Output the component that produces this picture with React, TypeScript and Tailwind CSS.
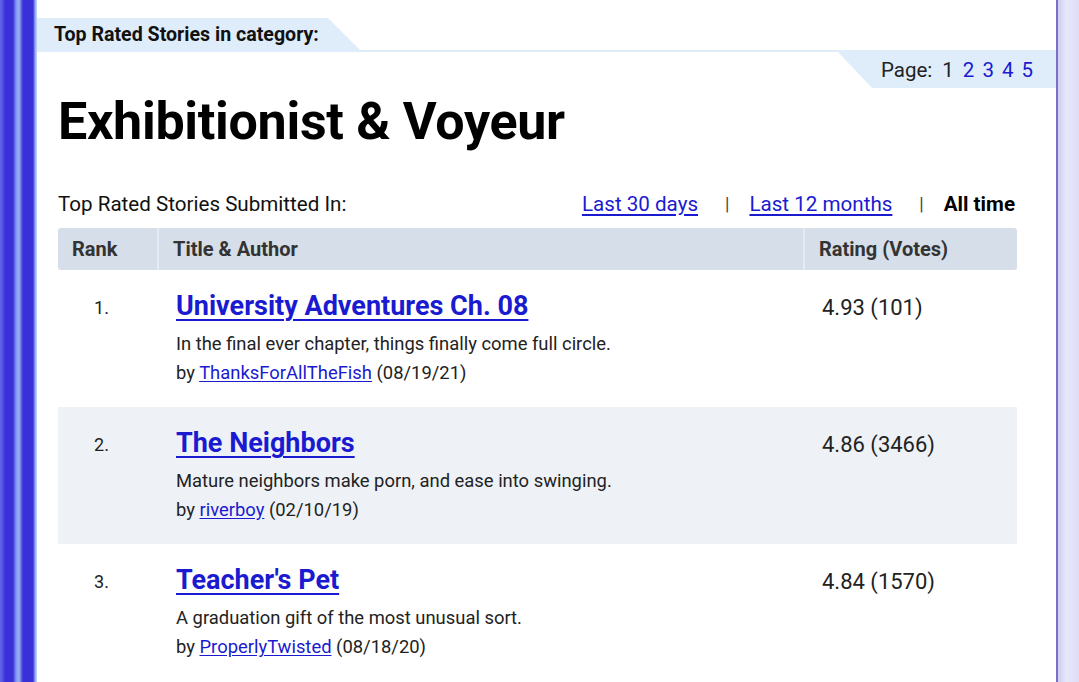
import React from "react";

const stories = [
  {
    rank: 1,
    title: "University Adventures Ch. 08",
    desc: "In the final ever chapter, things finally come full circle.",
    author: "ThanksForAllTheFish",
    date: "08/19/21",
    rating: "4.93 (101)",
  },
  {
    rank: 2,
    title: "The Neighbors",
    desc: "Mature neighbors make porn, and ease into swinging.",
    author: "riverboy",
    date: "02/10/19",
    rating: "4.86 (3466)",
  },
  {
    rank: 3,
    title: "Teacher's Pet",
    desc: "A graduation gift of the most unusual sort.",
    author: "ProperlyTwisted",
    date: "08/18/20",
    rating: "4.84 (1570)",
  },
];

const App = () => {
  return (
    <div className="flex h-[682px] w-[1079px] overflow-hidden bg-white font-['Roboto',sans-serif] text-[#111]">
      {/* Left striped border */}
      <div className="w-[37px] shrink-0 bg-[linear-gradient(to_right,#6464ea_0px,#5050e2_3px,#3a30d8_5px,#3a30d8_13px,#7f96ee_16px,#9ab0f4_19px,#3a30d8_23px,#3a30d8_33px,#8aa4f4_35px,#c8d8fc_37px)]" />

      {/* Main content */}
      <main className="w-[1019px] shrink-0 pt-[18px]">
        {/* Top tab */}
        <div className="flex">
          <div className="h-[32px] w-[323px] bg-[#dfedfb] [clip-path:polygon(0_0,291px_0,323px_100%,0_100%)] pl-[17px] pt-[1px] text-[19.6px] font-bold leading-[32px] text-[#111]">
            Top Rated Stories in category:
          </div>
        </div>
        <div className="h-[2px] bg-[#dfedfb]" />

        {/* Page tab */}
        <div className="flex justify-end">
          <div className="flex h-[36px] w-[218px] items-center gap-[8px] bg-[#dfedfb] pl-[43px] text-[20.5px] [clip-path:polygon(0_0,100%_0,100%_100%,34px_100%)]">
            <span className="text-[#222]">Page:</span>
            <span className="ml-[2px] text-[#222]">1</span>
            <a href="#" className="ml-[1px] text-[#1a1ad0]">2</a>
            <a href="#" className="text-[#1a1ad0]">3</a>
            <a href="#" className="text-[#1a1ad0]">4</a>
            <a href="#" className="text-[#1a1ad0]">5</a>
          </div>
        </div>

        <div className="pl-[21px] pr-[39px]">
          <h1 className="mt-[1px] text-[52px] font-bold leading-[66px] tracking-[-0.3px] text-black">
            Exhibitionist &amp; Voyeur
          </h1>

          {/* Period selector */}
          <div className="mt-[37px] flex items-center text-[20.6px] leading-[24px]">
            <span className="text-[#111]">Top Rated Stories Submitted In:</span>
            <div className="ml-auto flex items-center">
              <a href="#" className="text-[#1a1ad0] underline underline-offset-[3px]">
                Last 30 days
              </a>
              <span className="ml-[27px] mr-[20px] text-[18px] text-[#444]">|</span>
              <a href="#" className="text-[#1a1ad0] underline underline-offset-[3px]">
                Last 12 months
              </a>
              <span className="ml-[27px] mr-[20px] text-[18px] text-[#444]">|</span>
              <span className="mr-[2px] font-bold text-black">All time</span>
            </div>
          </div>

          {/* Table */}
          <div className="mt-[12px]">
            <div className="flex h-[42px] overflow-hidden rounded-[3px] bg-[#d6dee9] text-[20px] font-bold text-[#333]">
              <div className="flex w-[99px] items-center pl-[14px]">Rank</div>
              <div className="w-[2px] bg-[#e6ebf2]" />
              <div className="flex w-[644px] items-center pl-[14px]">Title &amp; Author</div>
              <div className="w-[2px] bg-[#e6ebf2]" />
              <div className="flex flex-1 items-center pl-[14px]">Rating (Votes)</div>
            </div>

            {stories.map((s, i) => (
              <div
                key={s.rank}
                className={`flex h-[137px] ${i % 2 === 1 ? "bg-[#eef2f7]" : "bg-white"}`}
              >
                <div className="w-[118px] pl-[36px] pt-[24px] text-[18px] text-[#222]">{s.rank}.</div>
                <div className="w-[646px] pt-[19px]">
                  <a href="#" className="text-[27px] font-bold leading-[34px] text-[#1a1ad0] underline underline-offset-[4px] decoration-[2px]">
                    {s.title}
                  </a>
                  <p className="mt-[9px] text-[18.4px] leading-[24px] text-[#222]">{s.desc}</p>
                  <p className="mt-[5px] text-[18.4px] leading-[24px] text-[#222]">
                    by{" "}
                    <a href="#" className="text-[#1a1ad0] underline underline-offset-[2px]">
                      {s.author}
                    </a>{" "}
                    ({s.date})
                  </p>
                </div>
                <div className="flex-1 pt-[21px] text-[22px] text-[#222]">{s.rating}</div>
              </div>
            ))}
          </div>
        </div>
      </main>

      {/* Right border + background */}
      <div className="w-[2px] shrink-0 bg-[#7a72c8]" />
      <div className="flex-1 bg-[linear-gradient(to_right,#cfcdf1,#e8e8fb_40%,#dedcf6)]" />
    </div>
  );
};

export default App;
